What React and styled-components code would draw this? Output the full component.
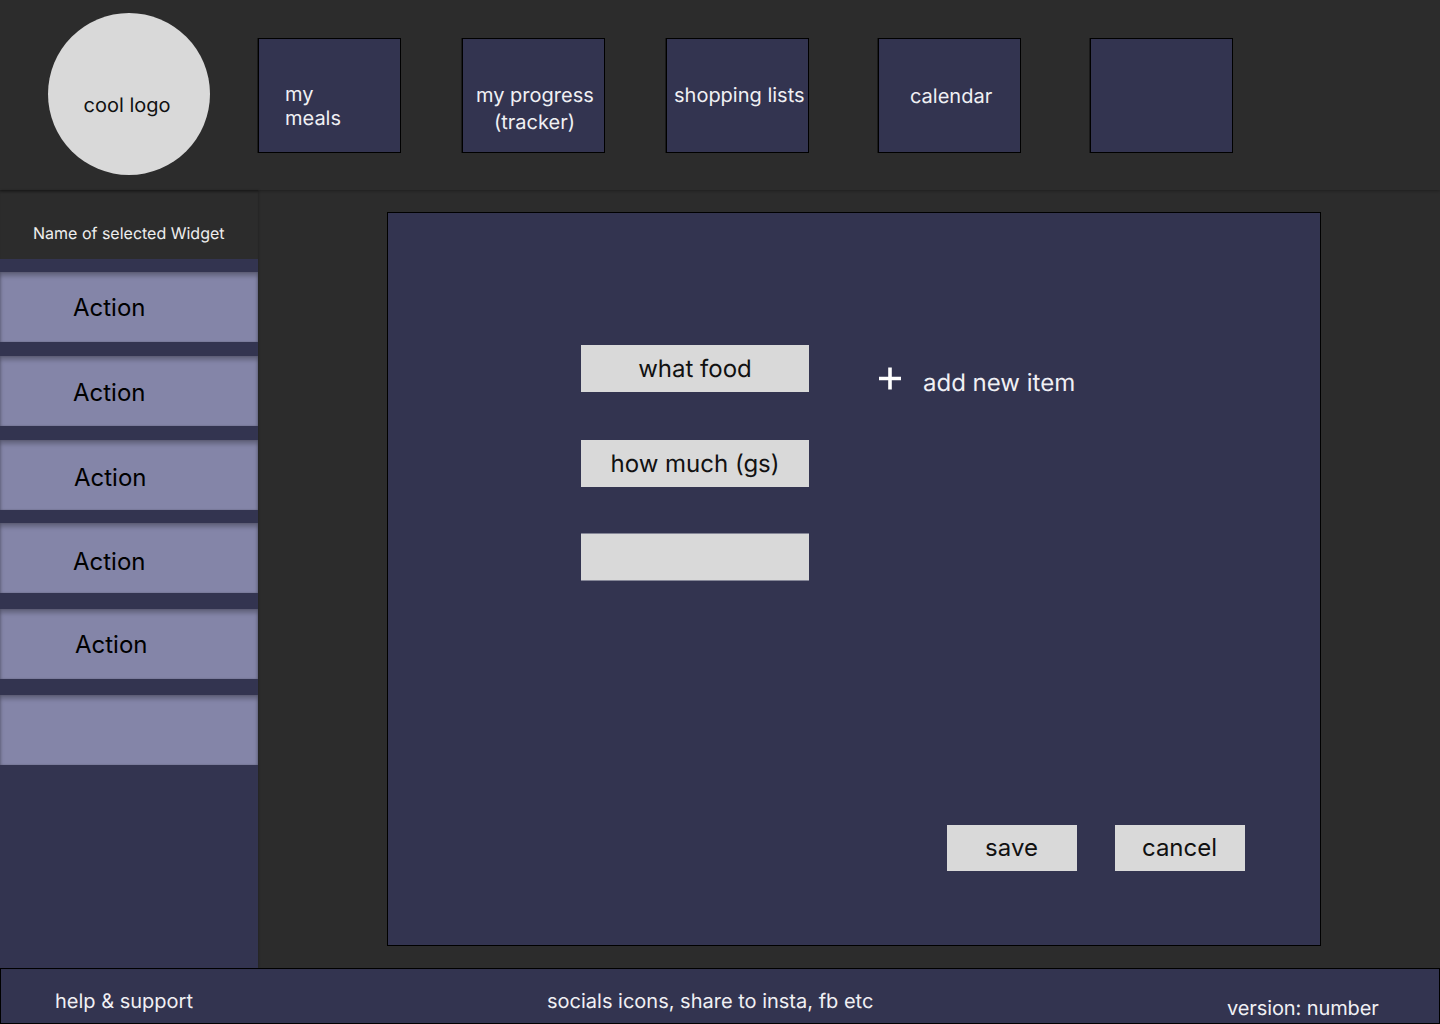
import React from "react";
import styled, { createGlobalStyle } from "styled-components";

const Global = createGlobalStyle`
  html, body { margin: 0; padding: 0; background: #2c2c2c; }
  body { font-family: Inter, "Noto Sans", sans-serif; overflow: hidden; text-rendering: geometricPrecision; }
  * { box-sizing: border-box; }
`;

const Page = styled.div`
  width: 1440px;
  height: 1024px;
  display: grid;
  grid-template-rows: 190px 778px 56px;
  background: #2c2c2c;
  overflow: hidden;
`;

const Header = styled.header`
  display: flex;
  align-items: flex-start;
  padding: 13px 0 0 48px;
  position: relative;
  z-index: 2;
  box-shadow: 0 1px 3px rgba(0, 0, 0, 0.3);
`;

const Logo = styled.div`
  width: 162px;
  height: 162px;
  border-radius: 50%;
  background: #d9d9d9;
  color: #111;
  font-size: 20px;
  display: flex;
  align-items: center;
  justify-content: center;
  padding: 22px 4px 0 0;
  margin-right: 48px;
  flex: none;
`;

const Tile = styled.a`
  width: 143px;
  height: 115px;
  margin-top: 25px;
  margin-right: ${(p) => p.$gap}px;
  flex: none;
  background: #333450;
  border: 1px solid #000;
  box-shadow: -1px 0 0 rgba(0, 0, 0, 0.4);
  color: #f0f0f4;
  font-size: 20px;
  line-height: ${(p) => p.$lh || 27}px;
  padding: ${(p) => p.$top}px 0 0 ${(p) => p.$left}px;
  text-align: ${(p) => p.$align || "left"};
  white-space: nowrap;
`;

const TileText = styled.div`
  width: ${(p) => p.$w}px;
`;

const Body = styled.div`
  display: grid;
  grid-template-columns: 258px 1fr;
  min-height: 0;
`;

const Sidebar = styled.aside`
  background: #333450;
  box-shadow: 1px 0 2px rgba(0, 0, 0, 0.2);
  display: flex;
  flex-direction: column;
  position: relative;
  z-index: 1;
`;

const WidgetName = styled.div`
  height: 69px;
  background: #2c2c2c;
  color: #eee;
  font-size: 16px;
  line-height: 20px;
  padding: 33px 0 0 33px;
  margin-bottom: 13px;
  box-shadow: inset 0 3px 3px -2px rgba(0, 0, 0, 0.35);
`;

const Action = styled.button`
  display: block;
  width: 258px;
  height: 70px;
  flex: none;
  border: 0;
  margin: 0 0 ${(p) => p.$after}px;
  background: #8485a8;
  box-shadow: inset 0 4px 4px rgba(0, 0, 0, 0.25), inset 1px 0 2px rgba(0, 0, 0, 0.12),
    inset -1px 0 2px rgba(0, 0, 0, 0.12);
  color: #000;
  font-family: inherit;
  font-size: 24px;
  line-height: 29px;
  text-align: left;
  padding: ${(p) => p.$top}px 0 0 ${(p) => p.$left}px;
`;

const Main = styled.main`
  padding: 22px 0 0 129px;
`;

const Panel = styled.section`
  width: 934px;
  height: 734px;
  background: #333450;
  border: 1px solid #000;
  padding: 132px 75px 74px 193px;
  display: flex;
  flex-direction: column;
`;

const FormRow = styled.div`
  display: flex;
  align-items: flex-start;
  gap: 69px;
`;

const Fields = styled.div`
  display: flex;
  flex-direction: column;
  align-items: flex-start;
`;

const Field = styled.div`
  width: 228px;
  height: 47px;
  margin-bottom: ${(p) => p.$after}px;
  background: #d9d9d9;
  color: #111;
  font-size: 24px;
  line-height: 47px;
  text-align: center;
`;

const BlankField = styled(Field)`
  height: 48px;
  border-top: 1px solid #858697;
  border-bottom: 1px solid #858697;
`;

const AddItem = styled.div`
  display: flex;
  align-items: center;
  gap: 21px;
  color: #f0f0f4;
  font-size: 24px;
  line-height: 29px;
  padding-top: 23px;
`;

const PlusIcon = styled.svg`
  width: 24px;
  height: 24px;
  margin-top: -7px;
  flex: none;
`;

const Buttons = styled.div`
  margin-top: auto;
  display: flex;
  justify-content: flex-end;
  gap: 38px;
`;

const Button = styled.button`
  width: 130px;
  height: 46px;
  border: 0;
  padding: 0 1px 2px 0;
  background: #d9d9d9;
  color: #111;
  font-family: inherit;
  font-size: 24px;
`;

const Footer = styled.footer`
  border: 1px solid #000;
  background: #333450;
  color: #f0f0f4;
  font-size: 20px;
  line-height: 24px;
  display: grid;
  grid-template-columns: 492px 680px 1fr;
  padding: 20px 0 0 54px;
`;

const VersionText = styled.span`
  padding-top: 7px;
  letter-spacing: -0.1px;
`;

const actions = [
  { label: "Action", left: 73, top: 1, after: 14 },
  { label: "Action", left: 73, top: 3, after: 14 },
  { label: "Action", left: 74, top: 5, after: 13 },
  { label: "Action", left: 73, top: 7, after: 16 },
  { label: "Action", left: 75, top: 0, after: 16 },
  { label: "", left: 0, top: 0, after: 0 },
];

export default function App() {
  return (
    <Page>
      <Global />
      <Header>
        <Logo>cool logo</Logo>
        <Tile $gap={61} $top={43} $left={26} $lh={24}>my<br />meals</Tile>
        <Tile $gap={61} $top={43} $left={13} $align="center">
          <TileText $w={117}>my progress<br />(tracker)</TileText>
        </Tile>
        <Tile $gap={69} $top={43} $left={7}>shopping lists</Tile>
        <Tile $gap={69} $top={44} $left={31}>calendar</Tile>
        <Tile $gap={0} $top={0} $left={0} />
      </Header>
      <Body>
        <Sidebar>
          <WidgetName>Name of selected Widget</WidgetName>
          {actions.map((a, i) => (
            <Action key={i} $left={a.left} $top={a.top} $after={a.after}>{a.label}</Action>
          ))}
        </Sidebar>
        <Main>
          <Panel>
            <FormRow>
              <Fields>
                <Field $after={48}>what food</Field>
                <Field $after={46}>how much (gs)</Field>
                <BlankField $after={0} />
              </Fields>
              <AddItem>
                <PlusIcon viewBox="0 0 24 24" fill="none" stroke="#fff" strokeWidth="3.6">
                  <path d="M12 0.5v22M1 11.5h22" />
                </PlusIcon>
                add new item
              </AddItem>
            </FormRow>
            <Buttons>
              <Button>save</Button>
              <Button>cancel</Button>
            </Buttons>
          </Panel>
        </Main>
      </Body>
      <Footer>
        <span>help &amp; support</span>
        <span>socials icons, share to insta, fb etc</span>
        <VersionText>version: number</VersionText>
      </Footer>
    </Page>
  );
}
